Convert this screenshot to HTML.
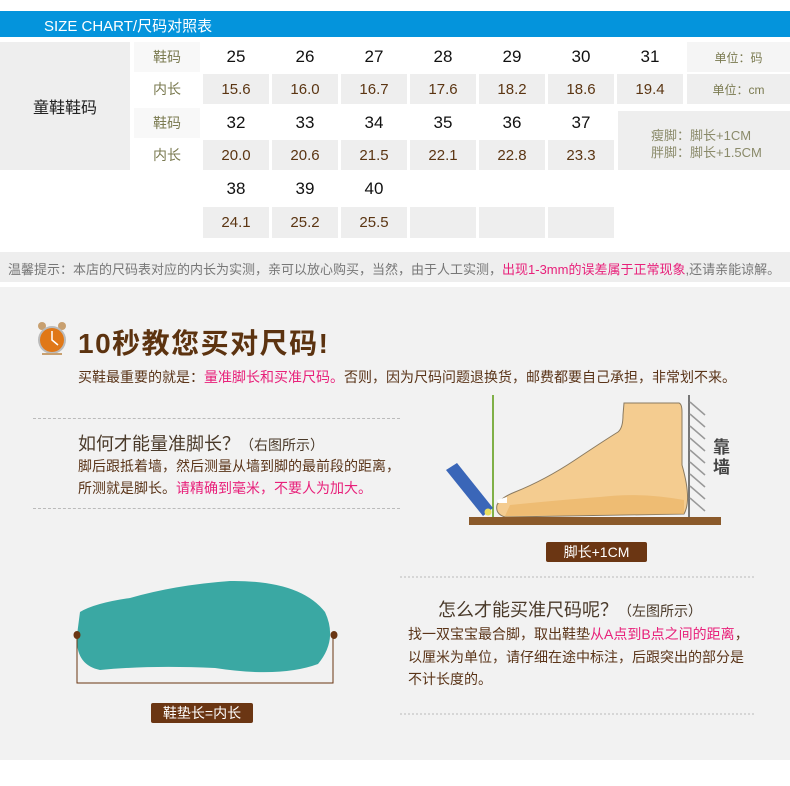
<!DOCTYPE html>
<html><head><meta charset="utf-8">
<style>
*{margin:0;padding:0;box-sizing:border-box}
body{width:790px;height:786px;background:#fff;position:relative;overflow:hidden;font-family:"Liberation Sans","Noto Sans CJK SC",sans-serif}
.a{position:absolute}
.c{position:absolute;display:flex;align-items:center;justify-content:center}
.n{font-size:17px;color:#111}
.v{font-size:15px;color:#5b3512;background:#eee}
.l{font-size:14px;color:#7a7a50}
.t{white-space:nowrap}
.br{color:#5a3418}
.pk{color:#e8207a}
</style></head><body>
<div class="a" style="left:0;top:11px;width:790px;height:26px;background:#0494dc"></div>
<div class="a t" style="left:44px;top:15px;color:#fff;font-size:15px">SIZE CHART/尺码对照表</div>

<div class="c" style="left:0;top:42px;width:130px;height:128px;background:#eee;font-size:16px;color:#222">童鞋鞋码</div>
<div class="c l" style="left:134px;top:42px;width:66px;height:30px;background:#f8f8f8">鞋码</div>
<div class="c l" style="left:134px;top:74px;width:66px;height:30px">内长</div>
<div class="c l" style="left:134px;top:108px;width:66px;height:30px;background:#f8f8f8">鞋码</div>
<div class="c l" style="left:134px;top:140px;width:66px;height:30px">内长</div>

<div class="c n" style="left:203px;top:42px;width:66px;height:30px">25</div>
<div class="c n" style="left:272px;top:42px;width:66px;height:30px">26</div>
<div class="c n" style="left:341px;top:42px;width:66px;height:30px">27</div>
<div class="c n" style="left:410px;top:42px;width:66px;height:30px">28</div>
<div class="c n" style="left:479px;top:42px;width:66px;height:30px">29</div>
<div class="c n" style="left:548px;top:42px;width:66px;height:30px">30</div>
<div class="c n" style="left:617px;top:42px;width:66px;height:30px">31</div>
<div class="c v" style="left:203px;top:74px;width:66px;height:30px">15.6</div>
<div class="c v" style="left:272px;top:74px;width:66px;height:30px">16.0</div>
<div class="c v" style="left:341px;top:74px;width:66px;height:30px">16.7</div>
<div class="c v" style="left:410px;top:74px;width:66px;height:30px">17.6</div>
<div class="c v" style="left:479px;top:74px;width:66px;height:30px">18.2</div>
<div class="c v" style="left:548px;top:74px;width:66px;height:30px">18.6</div>
<div class="c v" style="left:617px;top:74px;width:66px;height:30px">19.4</div>
<div class="c" style="left:687px;top:42px;width:103px;height:30px;background:#f5f5f5;font-size:12px;color:#7a7a50">单位：码</div>
<div class="c" style="left:687px;top:74px;width:103px;height:30px;background:#eee;font-size:12px;color:#7a7a50">单位：cm</div>

<div class="c n" style="left:203px;top:108px;width:66px;height:30px">32</div>
<div class="c n" style="left:272px;top:108px;width:66px;height:30px">33</div>
<div class="c n" style="left:341px;top:108px;width:66px;height:30px">34</div>
<div class="c n" style="left:410px;top:108px;width:66px;height:30px">35</div>
<div class="c n" style="left:479px;top:108px;width:66px;height:30px">36</div>
<div class="c n" style="left:548px;top:108px;width:66px;height:30px">37</div>
<div class="c v" style="left:203px;top:140px;width:66px;height:30px">20.0</div>
<div class="c v" style="left:272px;top:140px;width:66px;height:30px">20.6</div>
<div class="c v" style="left:341px;top:140px;width:66px;height:30px">21.5</div>
<div class="c v" style="left:410px;top:140px;width:66px;height:30px">22.1</div>
<div class="c v" style="left:479px;top:140px;width:66px;height:30px">22.8</div>
<div class="c v" style="left:548px;top:140px;width:66px;height:30px">23.3</div>
<div class="a" style="left:618px;top:111px;width:172px;height:59px;background:#eee;font-size:13px;color:#8a8a6a;line-height:17px;padding:16px 0 0 33px">瘦脚：脚长+1CM<br>胖脚：脚长+1.5CM</div>

<div class="c n" style="left:203px;top:174px;width:66px;height:30px">38</div>
<div class="c n" style="left:272px;top:174px;width:66px;height:30px">39</div>
<div class="c n" style="left:341px;top:174px;width:66px;height:30px">40</div>
<div class="c v" style="left:203px;top:207px;width:66px;height:31px">24.1</div>
<div class="c v" style="left:272px;top:207px;width:66px;height:31px">25.2</div>
<div class="c v" style="left:341px;top:207px;width:66px;height:31px">25.5</div>
<div class="c v" style="left:410px;top:207px;width:66px;height:31px"></div>
<div class="c v" style="left:479px;top:207px;width:66px;height:31px"></div>
<div class="c v" style="left:548px;top:207px;width:66px;height:31px"></div>

<div class="a" style="left:0;top:252px;width:790px;height:30px;background:#eee"></div>
<div class="a t" style="left:8px;top:259px;font-size:13px;color:#777">温馨提示：本店的尺码表对应的内长为实测，亲可以放心购买，当然，由于人工实测，<span class="pk">出现1-3mm的误差属于正常现象</span>,还请亲能谅解。</div>

<div class="a" style="left:0;top:287px;width:790px;height:473px;background:#f2f2f2"></div>

<svg class="a" style="left:36px;top:321px" width="32" height="36" viewBox="0 0 32 36">
<circle cx="6" cy="5" r="4" fill="#c8a070"/><circle cx="26" cy="5" r="4" fill="#c8a070"/>
<circle cx="16" cy="19" r="14" fill="#bbb"/><circle cx="16" cy="19" r="12" fill="#e07818"/>
<path d="M16 10 L16 19 L22 24" stroke="#fff" stroke-width="1.5" fill="none"/>
<path d="M6 33 L26 33" stroke="#c8a070" stroke-width="2"/></svg>
<div class="a t" style="left:78px;top:322px;font-size:28px;font-weight:bold;color:#5c3310;letter-spacing:1.5px">10秒教您买对尺码!</div>
<div class="a t br" style="left:78px;top:367px;font-size:14px">买鞋最重要的就是：<span class="pk">量准脚长和买准尺码。</span>否则，因为尺码问题退换货，邮费都要自己承担，非常划不来。</div>

<div class="a" style="left:33px;top:418px;width:367px;border-top:1px dashed #bbb"></div>
<div class="a" style="left:33px;top:508px;width:367px;border-top:1px dashed #bbb"></div>
<div class="a t" style="left:78px;top:430px;font-size:18px;color:#4a3a2a">如何才能量准脚长？<span style="font-size:14px">（右图所示）</span></div>
<div class="a t br" style="left:78px;top:455px;font-size:14px;line-height:22px">脚后跟抵着墙，然后测量从墙到脚的最前段的距离，<br>所测就是脚长。<span class="pk">请精确到毫米，不要人为加大。</span></div>

<svg class="a" style="left:0;top:0" width="790" height="786">
<line x1="493" y1="395" x2="493" y2="517" stroke="#5a9a10" stroke-width="1.5"/>
<line x1="689" y1="395" x2="689" y2="517" stroke="#777" stroke-width="2"/>
<g stroke="#999" stroke-width="1.5">
<line x1="690" y1="402" x2="705" y2="415"/><line x1="690" y1="414" x2="705" y2="427"/><line x1="690" y1="426" x2="705" y2="439"/><line x1="690" y1="438" x2="705" y2="451"/><line x1="690" y1="450" x2="705" y2="463"/><line x1="690" y1="462" x2="705" y2="475"/><line x1="690" y1="474" x2="705" y2="487"/><line x1="690" y1="486" x2="705" y2="499"/><line x1="690" y1="498" x2="705" y2="511"/></g>
<path d="M624 403 L679 403 Q682 404 682 412 L682 465 Q692 500 684 514 L505 517 Q495 514 497 505 Q500 498 515 492 Q545 480 575 460 Q605 440 618 432 Q623 428 623 415 Z" fill="#f4cc90" stroke="#8a7a60" stroke-width="1"/>
<path d="M510 505 Q560 500 600 497 Q640 492 684 500 L684 514 L505 516 Z" fill="#eab060" opacity="0.6"/>
<path d="M497 500 L507 497 L507 503 L498 503Z" fill="#fff"/>
<rect x="469" y="517" width="252" height="8" fill="#8b5a2b"/>
<path d="M446 470 L457 463 L493 508 L483 516 Z" fill="#3a66b8"/>
<circle cx="488" cy="512" r="3.5" fill="#e8e060"/>
<line x1="400" y1="577" x2="755" y2="577" stroke="#bbb" stroke-dasharray="2,2"/>
<line x1="400" y1="714" x2="755" y2="714" stroke="#bbb" stroke-dasharray="2,2"/>
<path d="M80 612 Q95 603 130 598 Q175 585 230 581 Q300 580 325 612 Q338 640 318 664 Q280 678 215 668 Q150 665 100 670 Q75 665 77 635 Z" fill="#3aa8a3"/>
<polyline points="77,636 77,683 333,683 333,636" fill="none" stroke="#6b3613" stroke-width="1"/>
<ellipse cx="77" cy="635" rx="3.5" ry="4" fill="#6b3613"/>
<ellipse cx="334" cy="635" rx="3.5" ry="4" fill="#6b3613"/>
</svg>
<div class="a t" style="left:713px;top:438px;font-size:17px;font-weight:bold;color:#444;line-height:20px;width:18px">靠<br>墙</div>
<div class="c" style="left:546px;top:542px;width:101px;height:20px;background:#6b3613;color:#fff;font-size:14px;border-radius:2px">脚长+1CM</div>
<div class="c" style="left:151px;top:703px;width:102px;height:20px;background:#6b3613;color:#fff;font-size:14px;border-radius:2px">鞋垫长=内长</div>

<div class="a t" style="left:438px;top:596px;font-size:18px;color:#4a3a2a">怎么才能买准尺码呢？<span style="font-size:14px">（左图所示）</span></div>
<div class="a t br" style="left:408px;top:623px;font-size:14px;line-height:22.5px">找一双宝宝最合脚，取出鞋垫<span class="pk">从A点到B点之间的距离</span>，<br>以厘米为单位，请仔细在途中标注，后跟突出的部分是<br>不计长度的。</div>
</body></html>
